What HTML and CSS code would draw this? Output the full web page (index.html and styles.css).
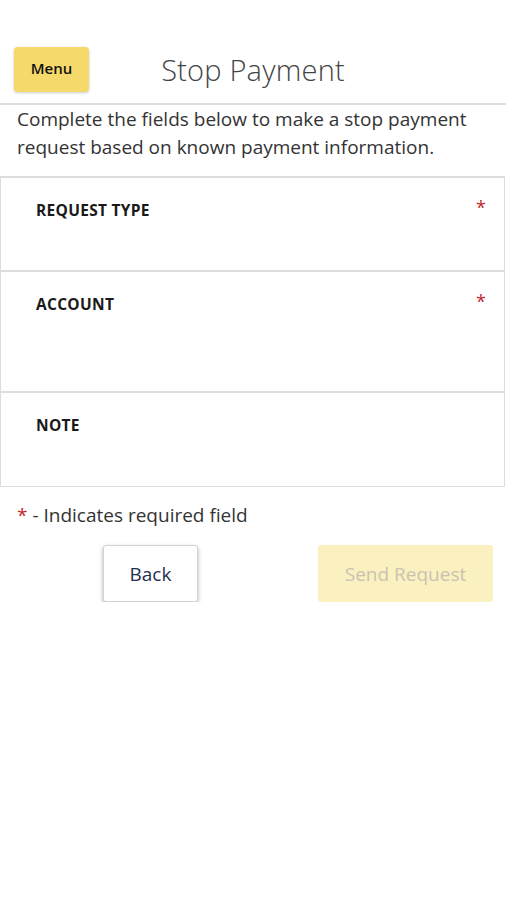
FILE: index.html
```html
<!DOCTYPE html>
<html lang="en">
<head>
  <meta charset="UTF-8" />
  <title>Stop Payment</title>
  <link rel="stylesheet" href="styles.css">
</head>
<body>
  <div class="header">
    <button class="menu-btn">Menu</button>
    <h1 class="title">Stop Payment</h1>
    <div></div>
  </div>

  <p class="intro">Complete the fields below to make a stop payment request based on known payment information.</p>

  <div class="fields">
    <div class="field field-type">
      <span class="label">REQUEST TYPE</span>
      <span class="req">*</span>
    </div>
    <div class="field field-account">
      <span class="label">ACCOUNT</span>
      <span class="req">*</span>
    </div>
    <div class="field field-note">
      <span class="label">NOTE</span>
    </div>
  </div>

  <p class="legend"><span class="req-inline">*</span> - Indicates required field</p>

  <div class="actions">
    <button class="back-btn">Back</button>
    <button class="send-btn" disabled>Send Request</button>
  </div>
</body>
</html>
```

FILE: styles.css
```css
html, body {
  margin: 0;
  padding: 0;
}

body {
  background: #ffffff;
  font-family: "Open Sans", "Noto Sans", sans-serif;
  color: #333333;
  width: 506px;
}

.header {
  display: grid;
  grid-template-columns: 1fr auto 1fr;
  align-items: center;
  padding: 47px 0 11px 0;
  border-bottom: 2px solid #dddddd;
}

.menu-btn {
  justify-self: start;
  margin-left: 14px;
  width: 75px;
  height: 45px;
  padding: 0 0 4px;
  border: none;
  border-radius: 4px;
  background: #f5d96b;
  box-shadow: 0 1px 3px rgba(0, 0, 0, 0.2);
  font-family: inherit;
  font-size: 15px;
  font-weight: 600;
  color: #111111;
}

.title {
  margin: 0;
  font-size: 29px;
  font-weight: 300;
  color: #444444;
  letter-spacing: 0.2px;
}

.intro {
  margin: 0;
  padding: 0 17px 0;
  font-size: 19px;
  line-height: 28px;
  color: #333333;
}

.fields {
  margin-top: 15px;
  border-top: 2px solid #dddddd;
  border-left: 1px solid #dddddd;
  border-right: 1px solid #dddddd;
  border-bottom: 1px solid #dddddd;
  margin-right: 1px;
}

.field {
  display: flex;
  justify-content: space-between;
  align-items: flex-start;
  padding: 21px 18px 0 35px;
  box-sizing: border-box;
}

.field + .field {
  border-top: 2px solid #dddddd;
}

.field-type { height: 92px; }
.field-account { height: 121px; }
.field-note { height: 95px; }

.label {
  font-size: 15.5px;
  font-weight: 700;
  color: #1a1a1a;
  letter-spacing: 0.3px;
}

.req {
  color: #c0282b;
  font-size: 18px;
  line-height: 18px;
  margin-top: -1px;
}

.legend {
  margin: 15px 0 0;
  padding: 0 17px;
  font-size: 19px;
  line-height: 26px;
  color: #333333;
}

.req-inline {
  color: #c0282b;
}

.actions {
  display: flex;
  margin-top: 17px;
  padding: 0 13px 0 103px;
}

.back-btn, .send-btn {
  height: 57px;
  border-radius: 3px;
  font-family: inherit;
  font-size: 19px;
}

.back-btn {
  width: 95px;
  background: #ffffff;
  border: 1px solid #d2d2d2;
  box-shadow: 0 2px 4px rgba(0, 0, 0, 0.3);
  color: #1f2f4f;
}

.send-btn {
  margin-left: auto;
  width: 175px;
  background: #fbf0c0;
  border: none;
  color: #c9c4b0;
}
```
